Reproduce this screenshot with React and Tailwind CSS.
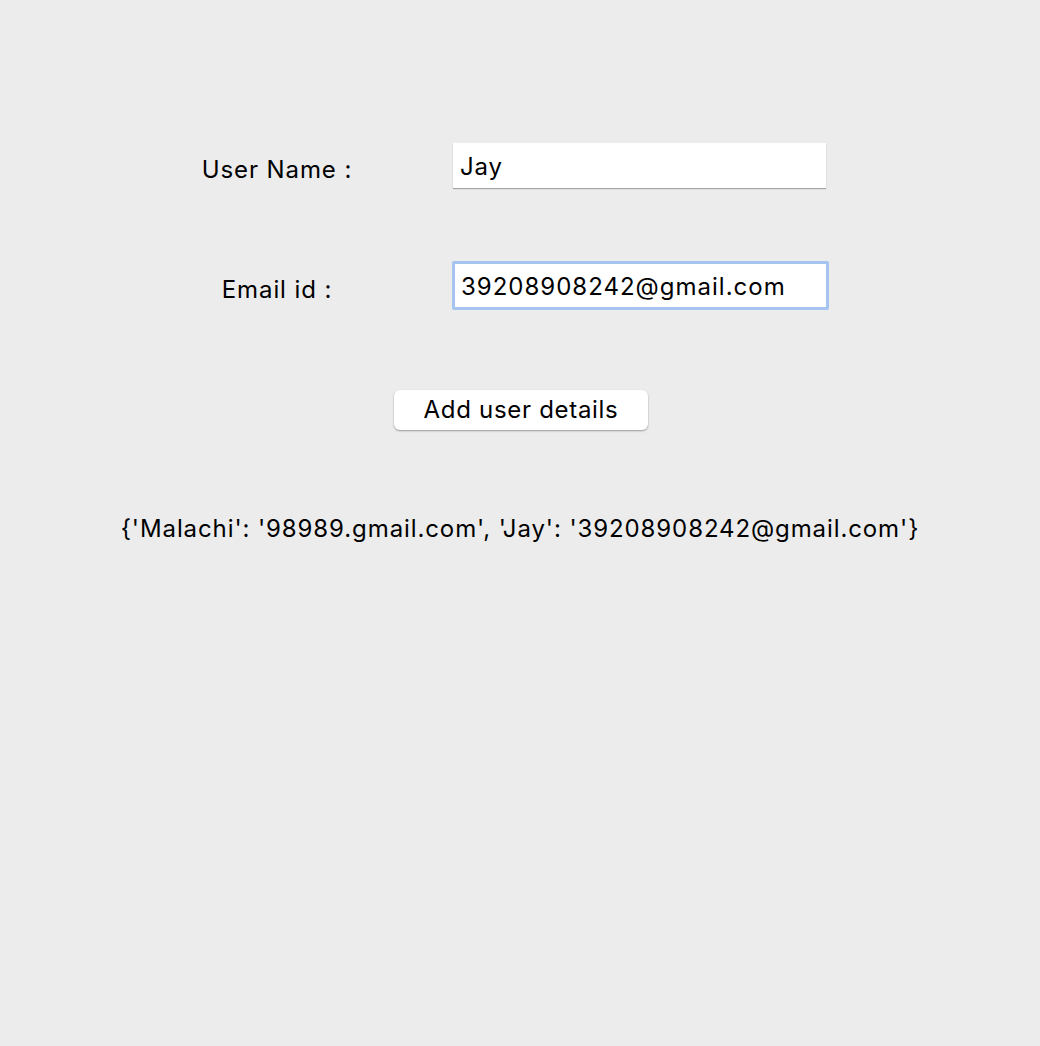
import React from "react";

const users = { Malachi: "98989.gmail.com", Jay: "39208908242@gmail.com" };

const App = () => {
    const result = "{" + Object.entries(users).map(([k, v]) => `'${k}': '${v}'`).join(", ") + "}";

    return (
        <div className="min-h-[1046px] w-full bg-[#ececec] text-black font-['Inter',sans-serif] text-[24px] tracking-[0.9px]">
            <div className="pt-[143px] pl-[177px]">
                <div className="flex items-center h-[45px]">
                    <div className="w-[200px] text-center leading-none pt-[8px]">User Name :</div>
                    <div className="ml-[76px] w-[373px] h-[45px] bg-white shadow-[0_1px_1px_rgba(0,0,0,0.3)] flex items-center px-[7px] pt-[2px]">
                        <span className="leading-none">Jay</span>
                    </div>
                </div>

                <div className="flex items-center mt-[73px] h-[49px]">
                    <div className="w-[200px] text-center leading-none pt-[8px]">Email id :</div>
                    <div className="ml-[75px] w-[377px] h-[49px] border-[3px] border-[#a5c4f0] rounded-[2px] bg-white flex items-center px-[6px] pt-[2px]">
                        <span className="leading-none tracking-[1px]">39208908242@gmail.com</span>
                    </div>
                </div>
            </div>

            <div className="flex justify-center mt-[80px] pl-[2px]">
                <button className="w-[254px] h-[40px] bg-white rounded-[6px] shadow-[0_1px_2px_rgba(0,0,0,0.35)] leading-none tracking-[0.7px]">
                    Add user details
                </button>
            </div>

            <p className="text-center mt-[87px] leading-none">{result}</p>
        </div>
    );
};

export default App;
